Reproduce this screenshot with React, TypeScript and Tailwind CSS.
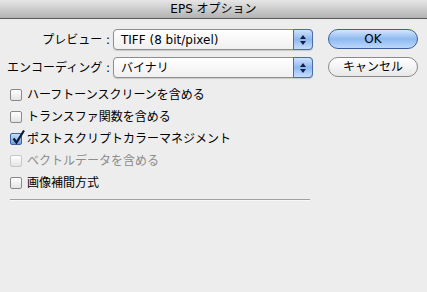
import React from 'react';

const jp = "font-['DejaVu_Sans','Noto_Sans_CJK_JP',sans-serif]";

const Popup: React.FC<{ value: string }> = ({ value }) => {
  return (
    <div className="flex h-[21px] w-[200px] rounded-[4px] border border-[#8e8e8e] bg-gradient-to-b from-white to-[#f0f0f0] shadow-[0_1px_1px_rgba(0,0,0,0.15)]">
      <div className={`flex-1 flex items-center pl-[7px] text-[12px] text-black ${jp}`}>{value}</div>
      <div className="w-[20px] -my-px -mr-px flex flex-col items-center justify-center gap-[2px] rounded-r-[4px] border border-[#4a6fa8] bg-gradient-to-b from-[#cfe2fb] via-[#8fb8ee] to-[#c8def9]">
        <span className="w-0 h-0 border-l-[3px] border-r-[3px] border-b-[4px] border-l-transparent border-r-transparent border-b-[#10214a]" />
        <span className="w-0 h-0 border-l-[3px] border-r-[3px] border-t-[4px] border-l-transparent border-r-transparent border-t-[#10214a]" />
      </div>
    </div>
  );
};

const Check: React.FC<{ label: string; checked?: boolean; disabled?: boolean }> = ({ label, checked, disabled }) => {
  return (
    <div className="flex items-center h-[22px]">
      {checked ? (
        <div className="w-[12px] h-[12px] rounded-[2px] border border-[#3f63a0] bg-gradient-to-b from-[#c9ddf8] to-[#6f9ee0] relative">
          <svg width="15" height="16" viewBox="0 0 15 16" className="absolute -top-[5px] left-0">
            <path d="M2.5 9.5 L5.5 13.5 L13 1.5" fill="none" stroke="#0c1a3a" strokeWidth="2.2" />
          </svg>
        </div>
      ) : (
        <div
          className={`w-[12px] h-[12px] rounded-[2px] border bg-gradient-to-b from-white to-[#e4e4e4] ${
            disabled ? 'border-[#c6c6c6]' : 'border-[#8a8a8a]'
          }`}
        />
      )}
      <span className={`ml-[5px] text-[12px] ${jp} ${disabled ? 'text-[#8c8c8c]' : 'text-black'}`}>{label}</span>
    </div>
  );
};

export default function App() {
  return (
    <div className="w-[427px] h-[292px] bg-[#ededed] flex flex-col">
      <div className={`h-[19px] flex items-center justify-center border-b border-[#595959] bg-gradient-to-b from-[#e6e6e6] to-[#b3b3b3] text-[12px] text-black ${jp}`}>
        EPS オプション
      </div>

      <div className="flex pt-[10px]">
        <div className="flex flex-col gap-[7px]">
          <div className="flex items-center">
            <div className={`w-[110px] text-right text-[12px] text-black ${jp}`}>プレビュー :</div>
            <div className="ml-[3px]">
              <Popup value="TIFF (8 bit/pixel)" />
            </div>
          </div>
          <div className="flex items-center">
            <div className={`w-[110px] text-right text-[12px] text-black ${jp}`}>エンコーディング :</div>
            <div className="ml-[3px]">
              <Popup value="バイナリ" />
            </div>
          </div>
        </div>

        <div className="ml-[15px] flex flex-col gap-[8px]">
          <button className={`w-[90px] h-[20px] rounded-full border border-[#3c5f9c] bg-gradient-to-b from-[#d4e5fb] via-[#8ebaf0] to-[#bcd8fa] text-[12px] text-black ${jp}`}>
            OK
          </button>
          <button className={`w-[90px] h-[20px] rounded-full border border-[#8a8a8a] bg-gradient-to-b from-white to-[#e8e8e8] text-[12px] text-black ${jp}`}>
            キャンセル
          </button>
        </div>
      </div>

      <div className="flex flex-col pl-[10px] mt-[6px]">
        <Check label="ハーフトーンスクリーンを含める" />
        <Check label="トランスファ関数を含める" />
        <Check label="ポストスクリプトカラーマネジメント" checked />
        <Check label="ベクトルデータを含める" disabled />
        <Check label="画像補間方式" />
      </div>

      <div className="ml-[10px] mt-[5px] w-[300px] border-t border-[#a0a0a0] border-b border-b-[#f8f8f8]" />
    </div>
  );
}
